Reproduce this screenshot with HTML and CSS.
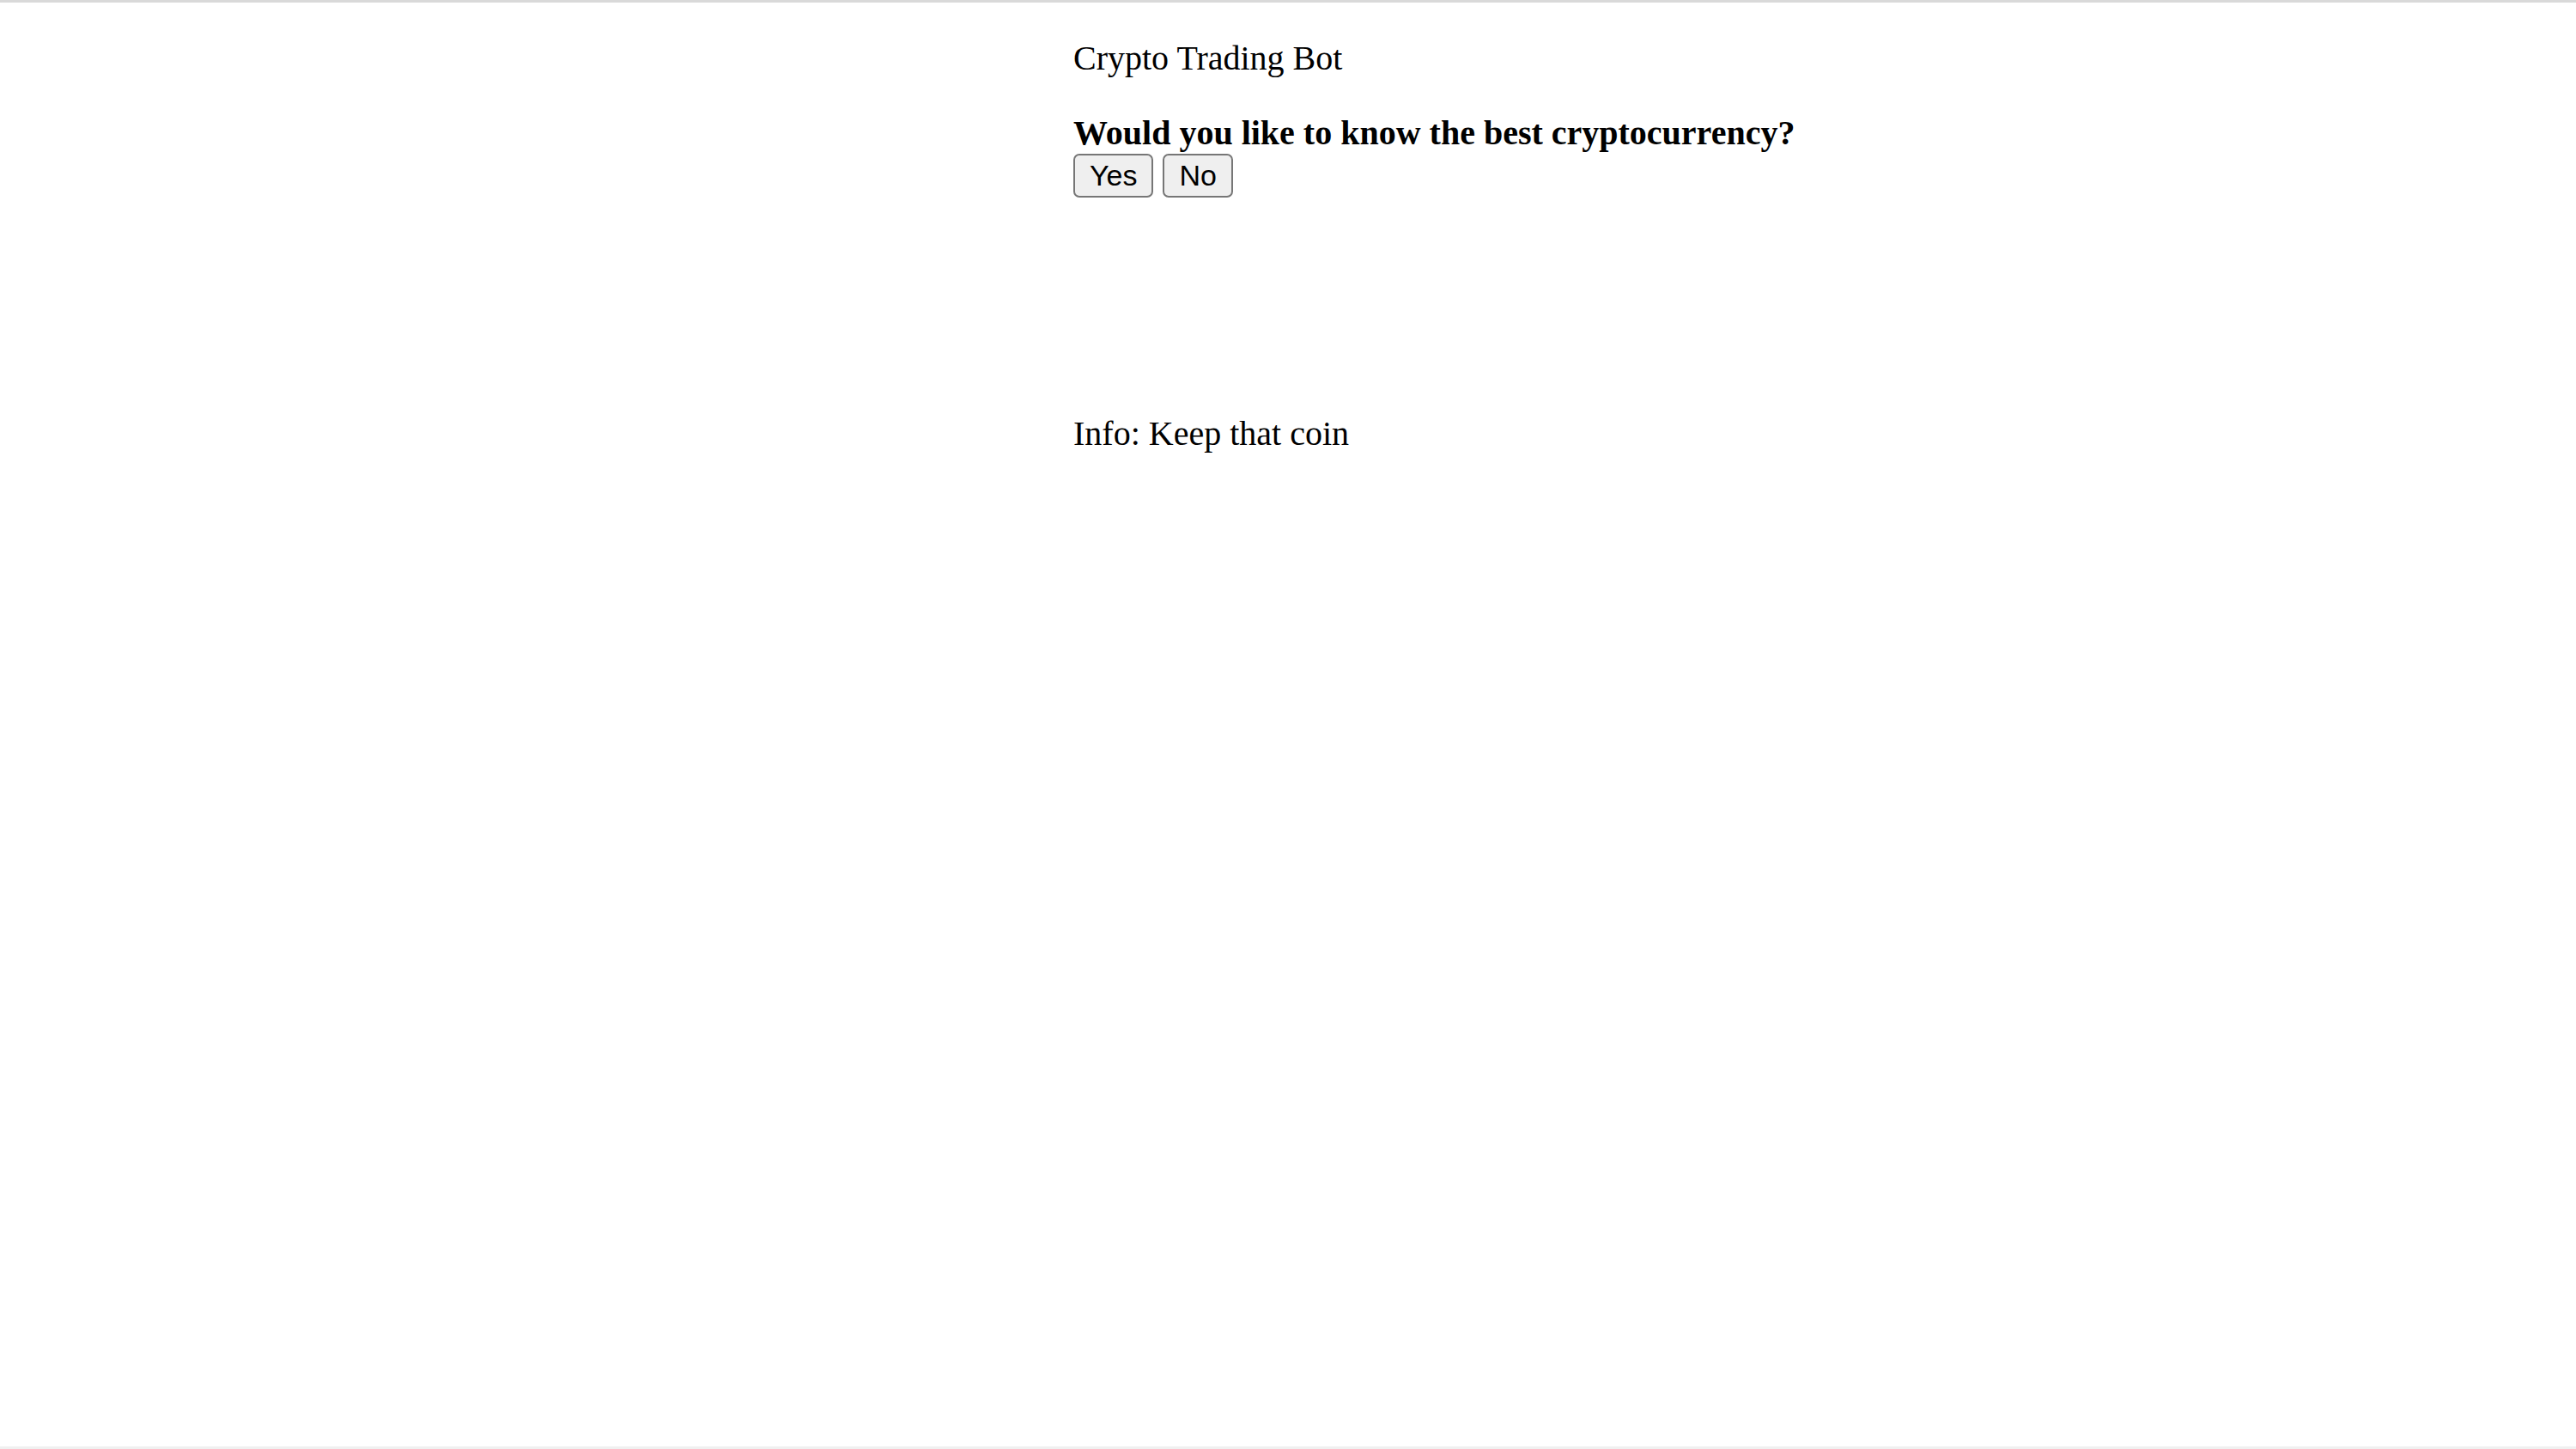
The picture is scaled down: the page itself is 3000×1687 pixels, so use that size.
FILE: index.html
```html
<!DOCTYPE html>
<html lang="en">
<head>
<meta charset="utf-8">
<title>Crypto Trading Bot</title>
<link rel="stylesheet" href="styles.css">
</head>
<body>
<div class="frame">
  <div class="topline"></div>
  <main class="page">
    <p class="title">Crypto Trading Bot</p>
    <p class="question">Would you like to know the best cryptocurrency?</p>
    <div class="actions">
      <button class="btn" type="button">Yes</button>
      <button class="btn" type="button">No</button>
    </div>
    <p class="info">Info: Keep that coin</p>
  </main>
  <div class="bottomline"></div>
</div>
</body>
</html>
```
FILE: styles.css
```css
html, body {
  margin: 0;
  padding: 0;
  background: #ffffff;
}
.frame {
  height: 1687px;
  display: flex;
  flex-direction: column;
  overflow: hidden;
}
.topline {
  height: 3px;
  background: #d9d9d9;
  flex: none;
}
.bottomline {
  height: 3px;
  background: #f0f0f0;
  flex: none;
}
.page {
  flex: 1;
  padding-left: 1250px;
  padding-top: 42px;
  font-family: "Liberation Serif", "Times New Roman", serif;
  font-size: 40px;
  line-height: 46px;
  color: #000000;
}
.title {
  margin: 0;
}
.question {
  margin: 41px 0 0;
  font-weight: bold;
}
.actions {
  display: flex;
  gap: 11px;
  margin-top: 1px;
}
.btn {
  font-family: "Liberation Sans", Arial, sans-serif;
  font-size: 34px;
  line-height: 38px;
  padding: 3px 17px 4px;
  height: 51px;
  border: 2.5px solid #767676;
  border-radius: 7px;
  background: #efefef;
  color: #000000;
}
.info {
  margin: 252px 0 0;
}
```
